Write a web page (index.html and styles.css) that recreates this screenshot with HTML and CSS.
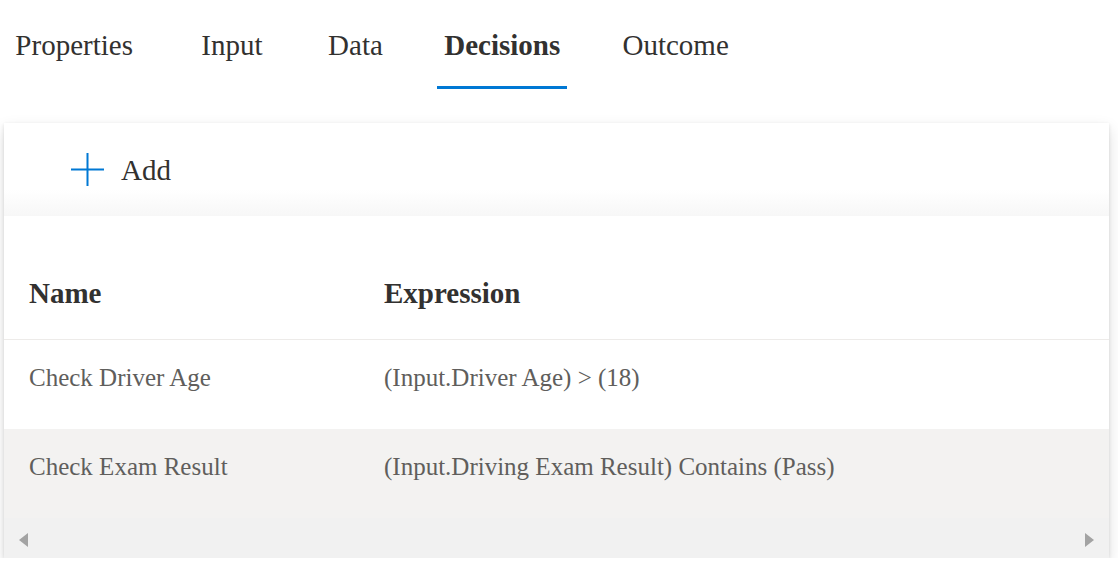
FILE: index.html
```html
<!DOCTYPE html>
<html lang="en">
<head>
<meta charset="utf-8">
<title>Decisions</title>
<link rel="stylesheet" href="styles.css">
</head>
<body>
<nav class="pivot">
  <div class="tab" data-label="Properties"><span>Properties</span></div>
  <div class="tab" data-label="Input"><span>Input</span></div>
  <div class="tab" data-label="Data"><span>Data</span></div>
  <div class="tab tab-active" data-label="Decisions"><span>Decisions</span></div>
  <div class="tab" data-label="Outcome"><span>Outcome</span></div>
</nav>
<section class="card">
  <div class="commandbar">
    <div class="add-btn">
      <svg class="plus" width="33" height="33" viewBox="0 0 33 33" aria-hidden="true">
        <path d="M16.5 0 V33 M0 16.5 H33" stroke="#0078d4" stroke-width="2" fill="none"/>
      </svg>
      <span>Add</span>
    </div>
  </div>
  <div class="table">
    <div class="row header">
      <div>Name</div>
      <div>Expression</div>
    </div>
    <div class="row">
      <div>Check Driver Age</div>
      <div>(Input.Driver Age) &gt; (18)</div>
    </div>
    <div class="row row-hover">
      <div>Check Exam Result</div>
      <div>(Input.Driving Exam Result) Contains (Pass)</div>
    </div>
    <div class="scrollbar">
      <span class="arrow arrow-left"></span>
      <span class="arrow arrow-right"></span>
    </div>
  </div>
</section>
</body>
</html>
```
FILE: styles.css
```css
* { box-sizing: border-box; }
html, body {
  margin: 0;
  padding: 0;
  background: #ffffff;
  font-family: "Liberation Serif", "Times New Roman", serif;
  color: #323130;
}
.pivot {
  display: flex;
  gap: 45px;
  padding-left: 3px;
}
.tab {
  display: flex;
  flex-direction: column;
  align-items: center;
  padding: 27px 7px 23px;
  border-bottom: 3px solid transparent;
  font-size: 29px;
  line-height: 36px;
  color: #323130;
}
.tab::after {
  content: attr(data-label);
  font-weight: 700;
  height: 0;
  overflow: hidden;
  visibility: hidden;
}
.tab-active {
  font-weight: 700;
  border-bottom-color: #0078d4;
}
.card {
  margin: 34px 0 0 4px;
  width: 1105px;
  background: #ffffff;
  box-shadow: 0 6.4px 14.4px 0 rgba(0,0,0,0.13), 0 1.2px 3.6px 0 rgba(0,0,0,0.11);
}
.commandbar {
  height: 93px;
  display: flex;
  align-items: center;
  padding-left: 67px;
  background: linear-gradient(to bottom, #ffffff 0%, #ffffff 72%, #f7f7f7 100%);
}
.add-btn {
  display: flex;
  align-items: center;
  gap: 17px;
  font-size: 29px;
  line-height: 36px;
  color: #323130;
}
.plus { display: block; }
.row {
  display: grid;
  grid-template-columns: 355px 1fr;
  padding: 22px 0 36px 25px;
  font-size: 25px;
  line-height: 31px;
  color: #605e5c;
  white-space: nowrap;
}
.header {
  padding: 59px 0 28px 25px;
  font-size: 29px;
  line-height: 36px;
  font-weight: 700;
  color: #323130;
  border-bottom: 1px solid #edebe9;
}
.row-hover { background: #f3f2f1; }
.scrollbar {
  height: 40px;
  background: #f1f1f1;
  display: flex;
  justify-content: space-between;
  align-items: center;
  padding: 3px 15px 0 15px;
}
.arrow {
  width: 0;
  height: 0;
  border-top: 7.5px solid transparent;
  border-bottom: 7.5px solid transparent;
}
.arrow-left { border-right: 9px solid #a3a3a3; }
.arrow-right { border-left: 9px solid #a3a3a3; }
```
